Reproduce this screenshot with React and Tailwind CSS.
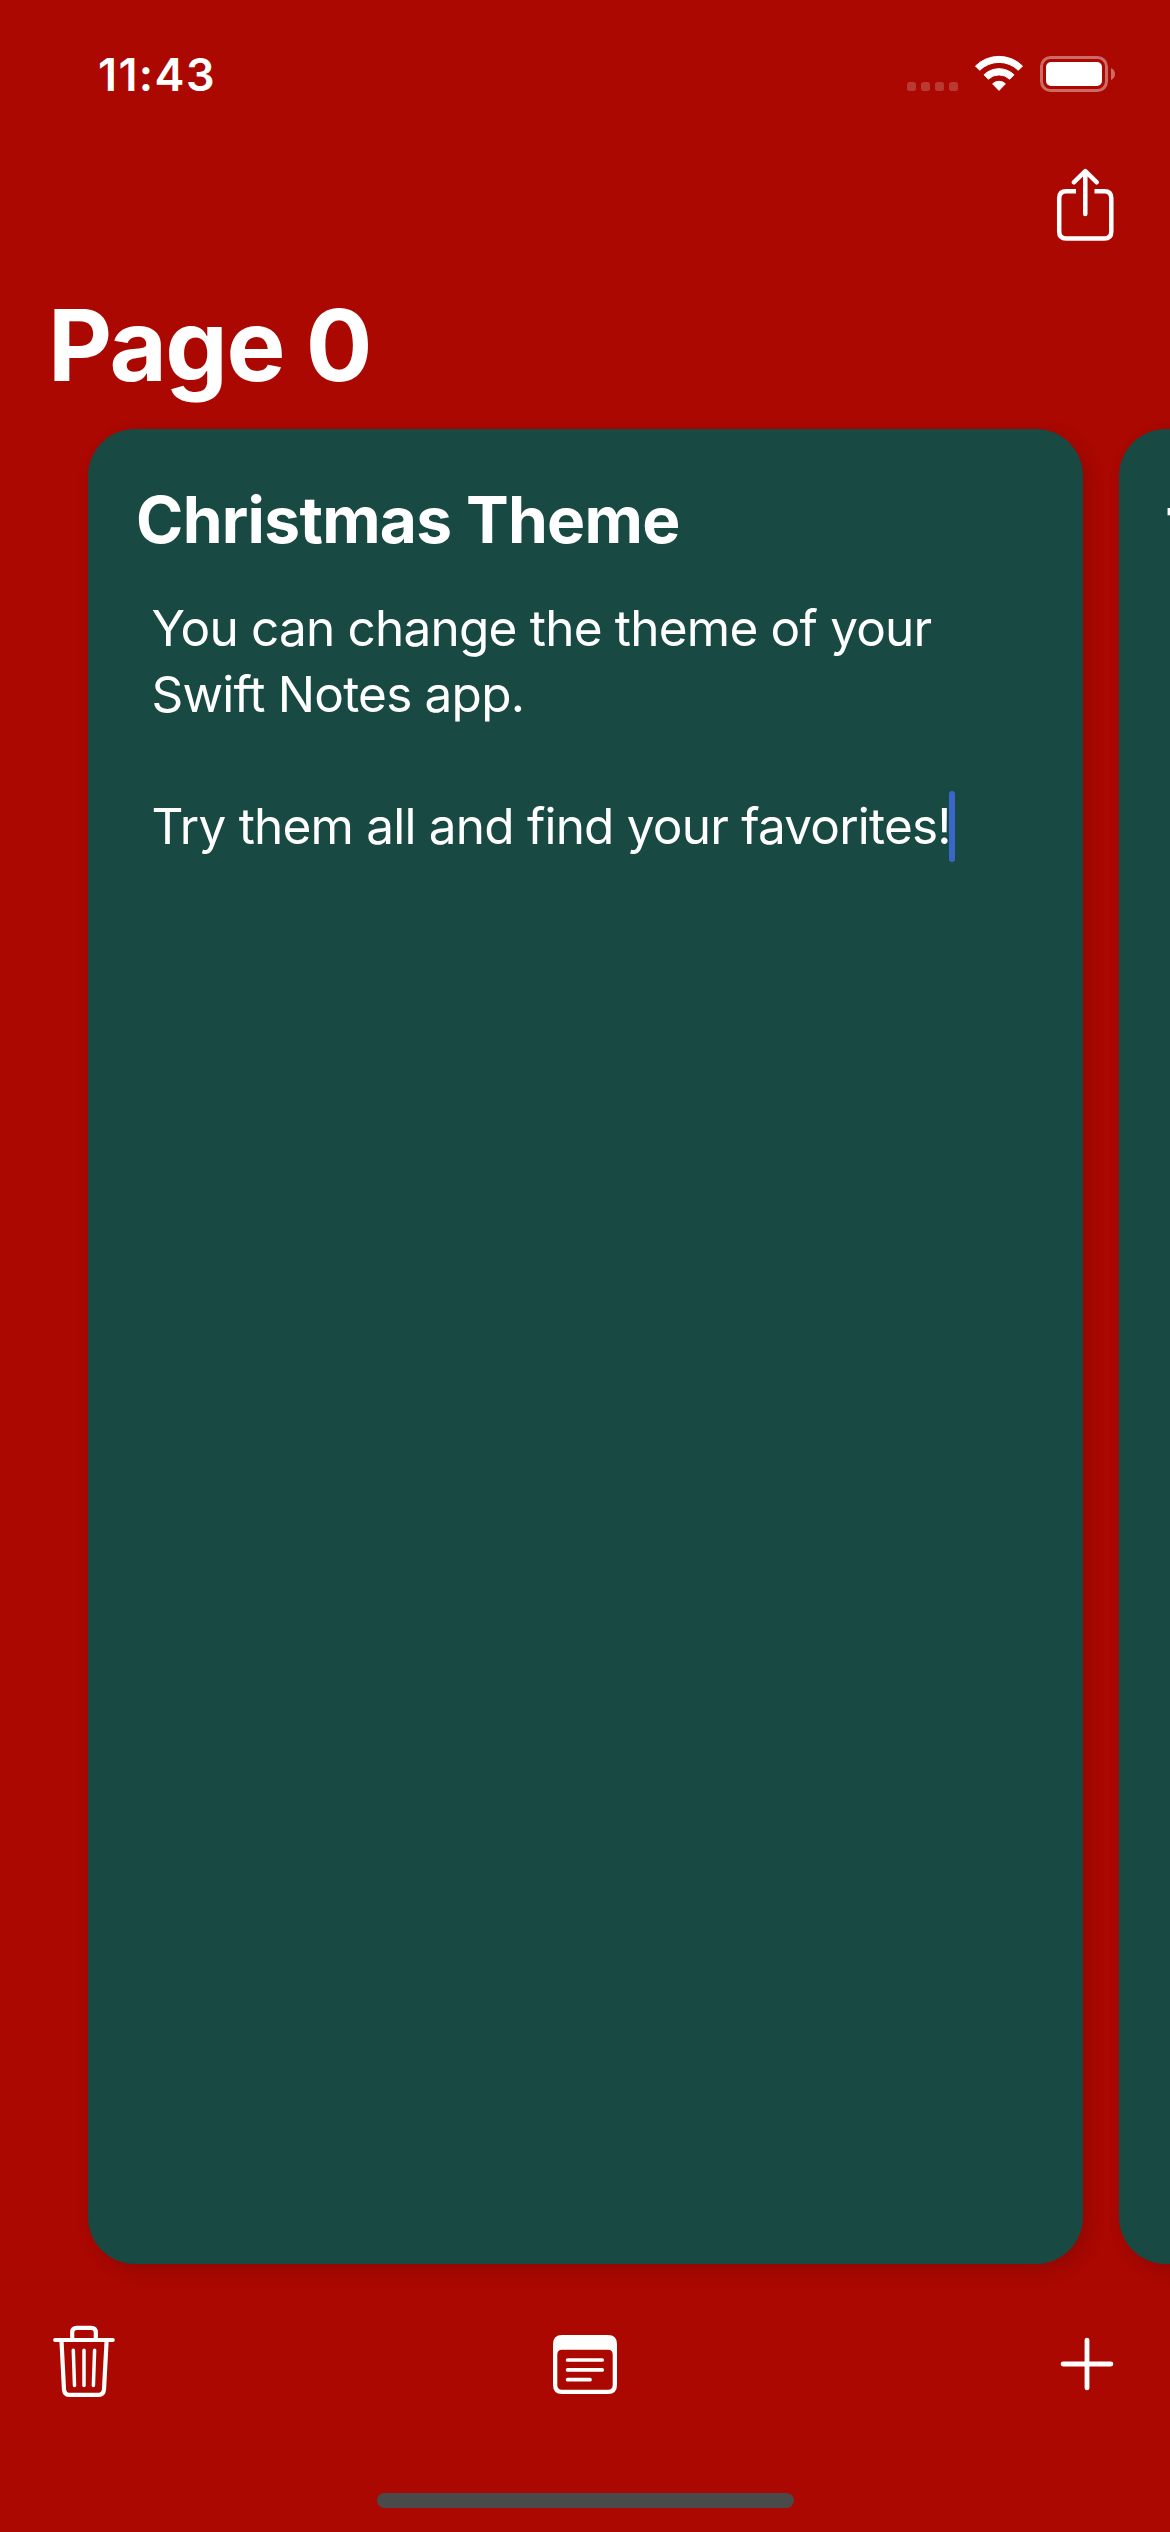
function StatusBar() {
  return (
    <header className="flex h-[141px] shrink-0 items-start justify-between pr-[55px] pl-[98px]">
      <time className="pt-[48px] text-[45px] leading-[54px] font-semibold tracking-[1.4px]">11:43</time>
      <div className="flex pt-[52px]">
        <div className="mt-[30px] flex gap-[5px]">
          {[0, 1, 2, 3].map((i) => (
            <span key={i} className="size-[9px] rounded-[2.5px] bg-white/20" />
          ))}
        </div>
        <svg className="ml-[16px] h-[44px] w-[50px]" viewBox="974 52 50 44" fill="#fff" stroke="#fff" strokeWidth="1" strokeLinejoin="round">
          <path d="M975.5 66A33.5 33.5 0 0 1 1022.500 66L1018.300 70.300A27.500 27.500 0 0 0 979.700 70.300Z" />
          <path d="M984 74.800A21.500 21.500 0 0 1 1014 74.800L1009.700 79.200A15.500 15.500 0 0 0 988.300 79.200Z" />
          <path d="M992.600 83.800A9.500 9.500 0 0 1 1005.400 83.800L999 90.400Z" />
        </svg>
        <svg className="ml-[15px] h-[44px] w-[76px]" viewBox="1039 52 76 44">
          <rect x="1041.500" y="57.500" width="65" height="33" rx="9" fill="none" stroke="#fff" strokeOpacity=".4" strokeWidth="3" />
          <rect x="1046" y="62" width="56" height="24" rx="5" fill="#fff" />
          <path d="M1111 68Q1115 70 1115 74T1111 80Z" fill="#fff" fillOpacity=".4" />
        </svg>
      </div>
    </header>
  )
}

function ShareIcon() {
  return (
    <svg className="h-[80px] w-[62px]" viewBox="1054 165 62 80" fill="none" stroke="#fff" strokeWidth="4.500">
      <path d="M1076 191.300H1066.200Q1059.200 191.300 1059.200 198.300V231.500Q1059.200 238.500 1066.200 238.500H1104.300Q1111.300 238.500 1111.300 231.500V198.300Q1111.300 191.300 1104.300 191.300H1094.500" />
      <path d="M1085.300 214V172M1073.800 182.300L1085.300 171.200L1096.800 182.300" strokeLinecap="round" strokeLinejoin="round" />
    </svg>
  )
}

function TrashIcon() {
  return (
    <svg className="h-[80px] w-[66px]" viewBox="51 2322 66 80" fill="none" stroke="#fff" strokeWidth="4.200" strokeLinecap="round">
      <path d="M55.200 2340H112.700M72.200 2339V2332.500Q72.200 2327.900 76.800 2327.900H91.200Q95.800 2327.900 95.800 2332.500V2339" />
      <path d="M61.500 2341L64 2389.500Q64.500 2394.900 69 2394.900H98.700Q103.500 2394.900 104 2389.500L106.600 2341" />
      <path d="M73.300 2350.300L74.500 2385.500M84 2350.300V2385.500M94.600 2350.300L93.400 2385.500" strokeWidth="3.500" />
    </svg>
  )
}

function NoteIcon() {
  return (
    <svg className="h-[64px] w-[68px]" viewBox="551 2332 68 64">
      <path fill="#fff" fillRule="evenodd" d="M562 2335H608Q617 2335 617 2344V2385Q617 2394 608 2394H562Q553 2394 553 2385V2344Q553 2335 562 2335ZM562 2349.700Q557.300 2349.700 557.300 2354.400V2385Q557.300 2389.700 562 2389.700H608Q612.700 2389.700 612.700 2385V2354.400Q612.700 2349.700 608 2349.700Z" />
      <path d="M567.600 2360H602.200M567.600 2369.900H602.200M567.600 2379.700H590" stroke="#fff" strokeWidth="3.700" strokeLinecap="round" />
    </svg>
  )
}

function PlusIcon() {
  return (
    <svg className="h-[60px] w-[66px]" viewBox="1053.300 2333.700 66 60" fill="none" stroke="#fff" strokeWidth="4.800" strokeLinecap="round">
      <path d="M1063.400 2363.700H1111.200M1087.300 2339.800V2387.600" />
    </svg>
  )
}

function Card({ title, children }) {
  return (
    <article className="h-[1835px] w-[995px] shrink-0 rounded-[47px] bg-[#184a43] pt-[52px] pl-[48px] shadow-[6px_6px_18px_rgba(0,0,0,0.14)]">
      <h2 className="text-[64px] leading-[78px] font-bold tracking-[-0.7px] whitespace-nowrap">{title}</h2>
      {children}
    </article>
  )
}

export default function App() {
  return (
    <main className="flex h-[2532px] w-[1170px] flex-col overflow-hidden bg-[#aa0800] font-[Inter,sans-serif] text-white">
      <StatusBar />
      <div className="flex h-[128px] shrink-0 justify-end pt-[24px] pr-[54px]">
        <button className="block h-[80px]" aria-label="Share"><ShareIcon /></button>
      </div>
      <h1 className="h-[160px] shrink-0 pt-[16px] pl-[48px] text-[99px] leading-[120px] font-bold tracking-[-1.5px]">Page 0</h1>
      <section className="flex shrink-0 gap-[36px] pl-[88px]">
        <Card title="Christmas Theme">
          <div className="pt-[36px] pl-[15.500px] text-[49.500px] leading-[66px] tracking-[-0.79px] whitespace-nowrap">
            <p>You can change the theme of your</p>
            <p>Swift Notes app.</p>
            <p className="flex items-center pt-[66px]">
              <span>Try them all and find your favorites!</span>
              <span className="-my-[3px] -ml-[2px] h-[71px] w-[6px] rounded-[3px] bg-[#3a66c9]" />
            </p>
          </div>
        </Card>
        <Card title="t" />
      </section>
      <nav className="flex h-[229px] shrink-0 items-start justify-between pt-[58px] pr-[51px] pl-[51px]">
        <button className="block" aria-label="Delete"><TrashIcon /></button>
        <button className="mt-[10px] block" aria-label="Notes"><NoteIcon /></button>
        <button className="mt-[12px] block" aria-label="Add"><PlusIcon /></button>
      </nav>
      <div className="mx-auto h-[15px] w-[417px] shrink-0 rounded-full bg-[#4a4a4a]" />
    </main>
  )
}
